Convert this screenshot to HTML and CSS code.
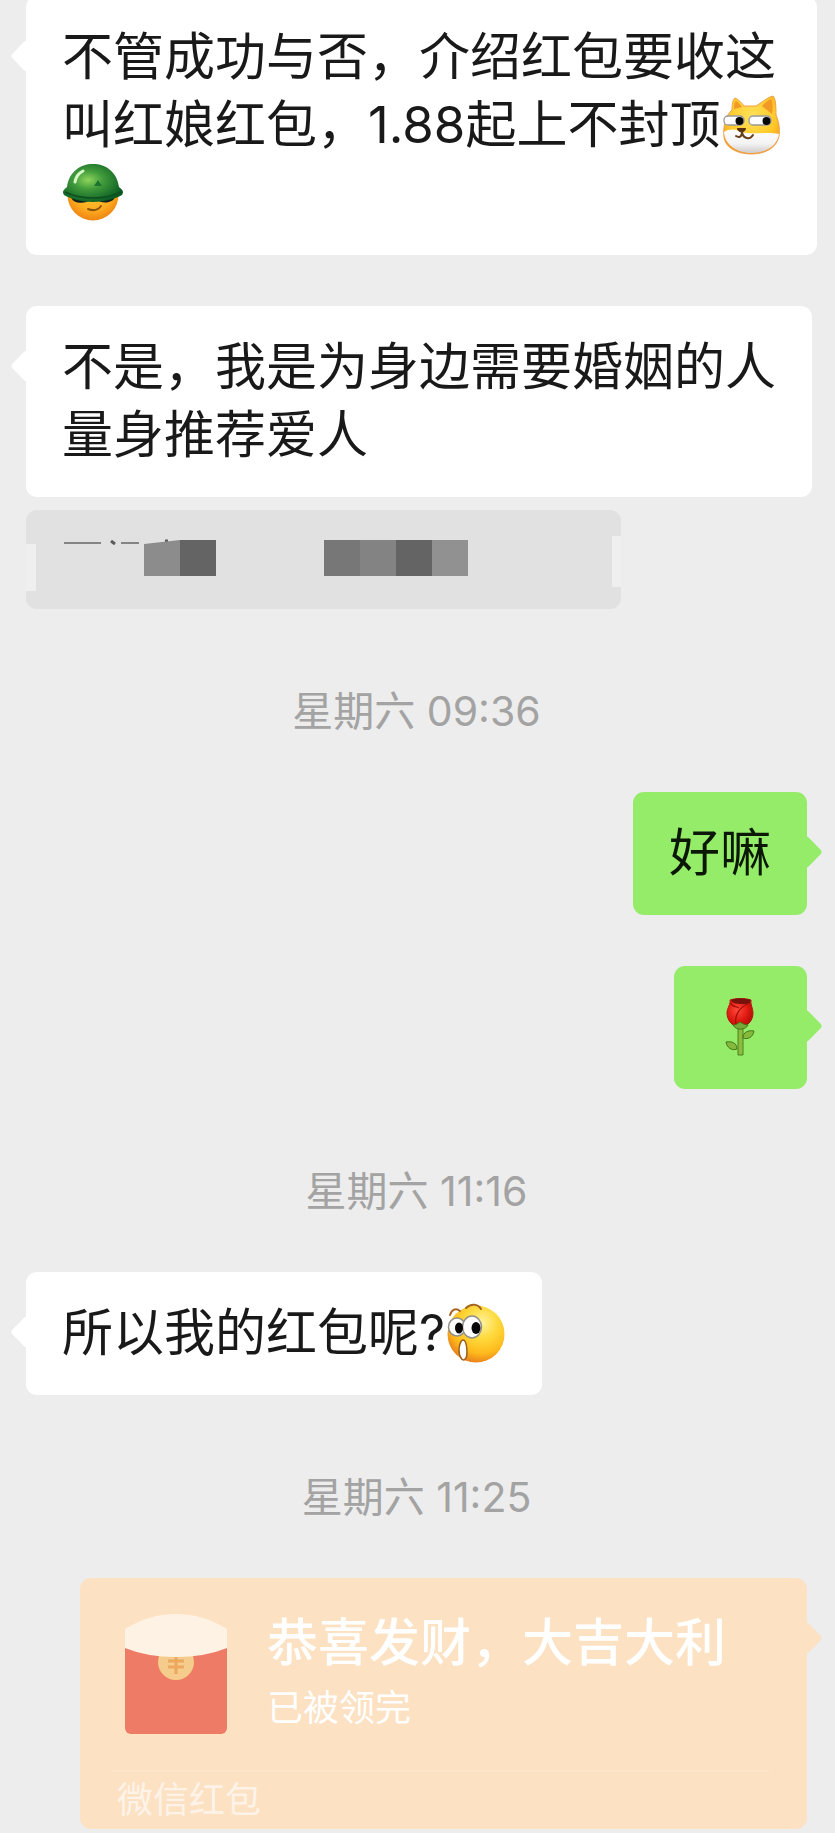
FILE: index.html
```html
<!DOCTYPE html>
<html lang="zh-CN">
<head>
<meta charset="utf-8">
<meta name="viewport" content="width=device-width, initial-scale=1">
<title>聊天</title>
<link rel="stylesheet" href="styles.css">
</head>
<body>
<main class="chat">
  <p class="bubble bubble-in">不管成功与否，介绍红包要收这<br>叫红娘红包，1.88起上不封顶<svg class="emoji" viewBox="0 0 61 61" role="img" aria-label="旺柴">
      <defs>
        <radialGradient id="dogFur" cx=".5" cy=".35" r=".65"><stop offset="0" stop-color="#ffe25a"/><stop offset=".65" stop-color="#ffc929"/><stop offset="1" stop-color="#f59a23"/></radialGradient>
        <linearGradient id="dogChin" x1="0" y1="0" x2="0" y2="1"><stop offset="0" stop-color="#fff"/><stop offset=".6" stop-color="#f4f3f3"/><stop offset="1" stop-color="#cfcbca"/></linearGradient>
      </defs>
      <path d="M12 15C12 9 13 4 15 3c3 1 7 5 9 8l12 0C41 8 48 2 53 1c3 3 3 12 3 19 3 7 4 14 3 21-2 11-13 18-27 18C16 59 5 52 4 42 3 32 5 21 12 15Z" fill="url(#dogFur)" stroke="#efa04c"/>
      <path d="M14 14c0-4 0-7 2-8 2 1 4 3 6 6Z M42 11c3-3 6-6 9-7 2 3 2 9 1 15Z" fill="#f39a26"/>
      <path d="M4 37c5-3 10-3 15-1 13 5 27 0 40 3-2 12-13 19-27 19S5 51 4 37Z" fill="url(#dogChin)"/>
      <rect x="4" y="21" width="20" height="9" rx="4" fill="#fff" stroke="#999" stroke-width="1.3"/>
      <rect x="29" y="21" width="22" height="9" rx="4" fill="#fff" stroke="#999" stroke-width="1.3"/>
      <circle cx="19.500" cy="26" r="4" fill="#080808"/><circle cx="46.500" cy="26" r="4" fill="#080808"/>
      <path d="M17 33h9c0 3-3 4-4 5-2-1-5-2-5-5Z" fill="#593214"/>
      <path d="M22 37c0 5-3 6-6 4M22 37c1 7 8 8 11 3" fill="none" stroke="#684019" stroke-width="2" stroke-linecap="round"/>
    </svg><br><svg class="emoji" viewBox="0 2 61 61" role="img" aria-label="戴钢盔的笑脸">
      <defs>
        <radialGradient id="helmet" cx=".42" cy=".42" r=".62"><stop offset="0" stop-color="#8cd45c"/><stop offset=".4" stop-color="#419b3b"/><stop offset="1" stop-color="#0a5c23"/></radialGradient>
        <radialGradient id="soldier" cx=".5" cy=".4" r=".6"><stop offset="0" stop-color="#ffc83c"/><stop offset=".65" stop-color="#ffae20"/><stop offset="1" stop-color="#ee8512"/></radialGradient>
      </defs>
      <circle cx="31" cy="34" r="25.500" fill="url(#soldier)"/>
      <path d="M9 35h44c0 7-14 9-18 3h-7C25 44 9 43 9 35Z" fill="#10201c"/>
      <path d="M5 26C7 11 18 3 31 3s24 8 26 23c4 3 5 5 3 8-7 4-18 7-29 7S9 38 2 34c-2-3-1-5 3-8Z" fill="url(#helmet)"/>
      <path d="M3 31c8 4 17 6 28 6s20-2 28-6" fill="none" stroke="#0d4d20" stroke-width="1.500"/>
      <path d="M13 21c1-6 4-9 8-11" fill="none" stroke="#d7f7c9" stroke-width="3" stroke-linecap="round"/>
      <path d="m32 25 4-6 4 6Z" fill="#1b7430"/>
      <path d="M26 48c5 2 10 1 13-3" fill="none" stroke="#8b5410" stroke-width="2" stroke-linecap="round"/>
    </svg></p>

  <p class="bubble bubble-in">不是，我是为身边需要婚姻的人<br>量身推荐爱人</p>

  <svg class="redacted" width="595" height="99" viewBox="0 0 595 99" role="img" aria-label="已打码的消息">
    <path d="M11 0H584a11 11 0 0 1 11 11V26h-9V77h9V88a11 11 0 0 1-11 11H11A11 11 0 0 1 0 88V81H10V34H0V11A11 11 0 0 1 11 0Z" fill="#e1e1e1"/>
    <path d="M0 34H10V81H0ZM586 26h9V77h-9Z" fill="#efefef"/>
    <path d="M38 32h37v2H38ZM95 32h18v2H95Z" fill="#858585"/>
    <path d="m85 31 4 3M139 31h3" stroke="#5c5c5c" stroke-width="3"/>
    <path d="M118 34 136 32 154 30V66H118Z" fill="#8c8c8c"/>
    <path d="M154 30h36v36h-36ZM370 30h36v36h-36Z" fill="#646464"/>
    <path d="M298 30h36v36h-36Z" fill="#777"/>
    <path d="M334 30h36v36h-36Z" fill="#838383"/>
    <path d="M406 30h36v36h-36Z" fill="#919191"/>
  </svg>

  <time class="stamp">星期六 09:36</time>
  <p class="bubble bubble-out">好嘛</p>
  <p class="bubble bubble-out"><svg class="emoji" viewBox="0 0 61 61" role="img" aria-label="玫瑰">
      <defs>
        <radialGradient id="petal" cx=".4" cy=".4" r=".65"><stop offset="0" stop-color="#ff4a3c"/><stop offset=".6" stop-color="#e01a10"/><stop offset="1" stop-color="#ad0d08"/></radialGradient>
      </defs>
      <path d="M28 30h5v28h-5Z" fill="#8cbd3c" stroke="#4a8020"/>
      <path d="M33 41c0-6 5-8 11-7-1 6-6 9-11 7ZM27 52c0-6-5-8-11-7 1 6 6 9 11 7Z" fill="#86b83c" stroke="#42781c"/>
      <path d="M20 3c6-2 15-2 21 0-1 4 2 8 2 13 0 8-6 14-13 14s-13-6-13-14c0-5 4-9 3-13Z" fill="url(#petal)" stroke="#b61710"/>
      <path d="M21 3c5-2 14-2 19 0 1 3-2 4-5 4-6 0-13 0-14-4Z" fill="#74120b"/>
      <path d="M38 7c-8 3-14 11-12 21M21 6c1 4 4 3 8 5" fill="none" stroke="#a50e08" stroke-width="1.300"/>
      <path d="M23 28c3 0 4-1 7-3 3 2 5 3 8 3-2 5-12 6-15 0Z" fill="#76a937" stroke="#42781c"/>
    </svg></p>

  <time class="stamp">星期六 11:16</time>
  <p class="bubble bubble-in">所以我的红包呢?<svg class="emoji" viewBox="0 0 61 61" role="img" aria-label="惊讶">
      <defs>
        <radialGradient id="gasp" cx=".6" cy=".3" r=".72"><stop offset="0" stop-color="#fff29a"/><stop offset=".4" stop-color="#ffd93b"/><stop offset=".75" stop-color="#ffba1c"/><stop offset="1" stop-color="#e8801c"/></radialGradient>
      </defs>
      <circle cx="31" cy="31" r="28.500" fill="url(#gasp)"/>
      <path d="M5 12C7 6 11 5 15 8M21 5c5-5 12-4 15 1" fill="none" stroke="#a5631f" stroke-width="2" stroke-linecap="round"/>
      <ellipse cx="12" cy="24" rx="8.500" ry="9" fill="#fff" stroke="#93908a" stroke-width="1.500"/>
      <ellipse cx="27" cy="24" rx="9.500" ry="11" fill="#fff" stroke="#93908a" stroke-width="1.500"/>
      <ellipse cx="14" cy="25" rx="4" ry="5.500" fill="#080808"/><ellipse cx="31" cy="25" rx="4.500" ry="6" fill="#080808"/>
      <path d="M18 37c4 0 6 18 1 20-3 0-5-5-5-10s2-10 4-10Z" fill="#fff" stroke="#9b601a" stroke-width="1.500"/>
    </svg></p>

  <time class="stamp">星期六 11:25</time>
  <a class="packet" href="#">
    <span class="packet-main">
      <svg class="envelope" viewBox="0 0 102 120" aria-hidden="true">
        <path d="M0 30H102V114a6 6 0 0 1-6 6H6a6 6 0 0 1-6-6Z" fill="#ed7b66"/>
        <circle cx="51" cy="48" r="18" fill="#f5cc8b"/>
        <path d="M43 47h16M43 53h16M51 42v18" fill="none" stroke="#eda75f" stroke-width="3"/>
        <path d="M0 15Q24 0 51 0T102 15V34Q80 43 51 43T0 34Z" fill="#fef2e5"/>
      </svg>
      <span class="packet-text">
        <strong class="packet-title">恭喜发财，大吉大利</strong>
        <span class="packet-status">已被领完</span>
      </span>
    </span>
    <span class="packet-source">微信红包</span>
  </a>
</main>
</body>
</html>
```
FILE: styles.css
```css
* {
  box-sizing: border-box;
}

body {
  margin: 0;
  background: #ededed;
  color: #191919;
  font-family: Inter, "Noto Sans CJK SC", sans-serif;
}

/* The thread is scrolled, so the first bubble starts just above the window. */
.chat {
  display: flex;
  flex-direction: column;
  align-items: flex-start;
  margin-top: -4px;
  padding: 0 28px 4px 26px;
}

.bubble {
  position: relative;
  margin: 0;
  padding: 27px 36px 28px;
  border-radius: 11px;
  font-size: 51px;
  line-height: 68px;
  white-space: nowrap;
}

.bubble + .bubble {
  margin-top: 51px;
}

.bubble-in {
  background: #fff;
}

.bubble-out {
  align-self: flex-end;
  background: #95ec69;
  color: #0c1806;
}

.bubble::before,
.packet::before {
  content: "";
  position: absolute;
  top: 48px;
  width: 24px;
  height: 24px;
  border-radius: 4px;
  background: inherit;
  transform: rotate(45deg);
}

.bubble-in::before {
  left: -11px;
}

.bubble-out::before,
.packet::before {
  right: -11px;
}

.emoji {
  display: inline-block;
  width: 61px;
  height: 61px;
  vertical-align: middle;
  margin: -8px 0 0;
}

.redacted {
  display: block;
  max-width: 100%;
  margin-top: 13px;
}

.stamp {
  align-self: center;
  margin: 78px 0 57px;
  color: #a3a3a3;
  font-size: 41px;
  line-height: 48px;
}

.packet {
  position: relative;
  align-self: stretch;
  display: block;
  margin-left: 54px;
  border-radius: 11px;
  background: #fce1c3;
  color: #fff;
  text-decoration: none;
}

.packet-main {
  display: flex;
  gap: 40px;
  padding: 36px 0 36px 45px;
}

.envelope {
  flex: none;
  width: 102px;
  height: 120px;
}

.packet-text {
  display: flex;
  flex-direction: column;
  gap: 12px;
}

.packet-title {
  font-size: 51px;
  font-weight: 500;
  line-height: 58px;
}

.packet-status {
  font-size: 36px;
  line-height: 48px;
}

.packet-source {
  display: block;
  margin: 0 37px 0 31px;
  padding-left: 6px;
  border-top: 2px solid #fde5cb;
  color: #fef3e8;
  font-size: 36px;
  line-height: 57px;
}
```
